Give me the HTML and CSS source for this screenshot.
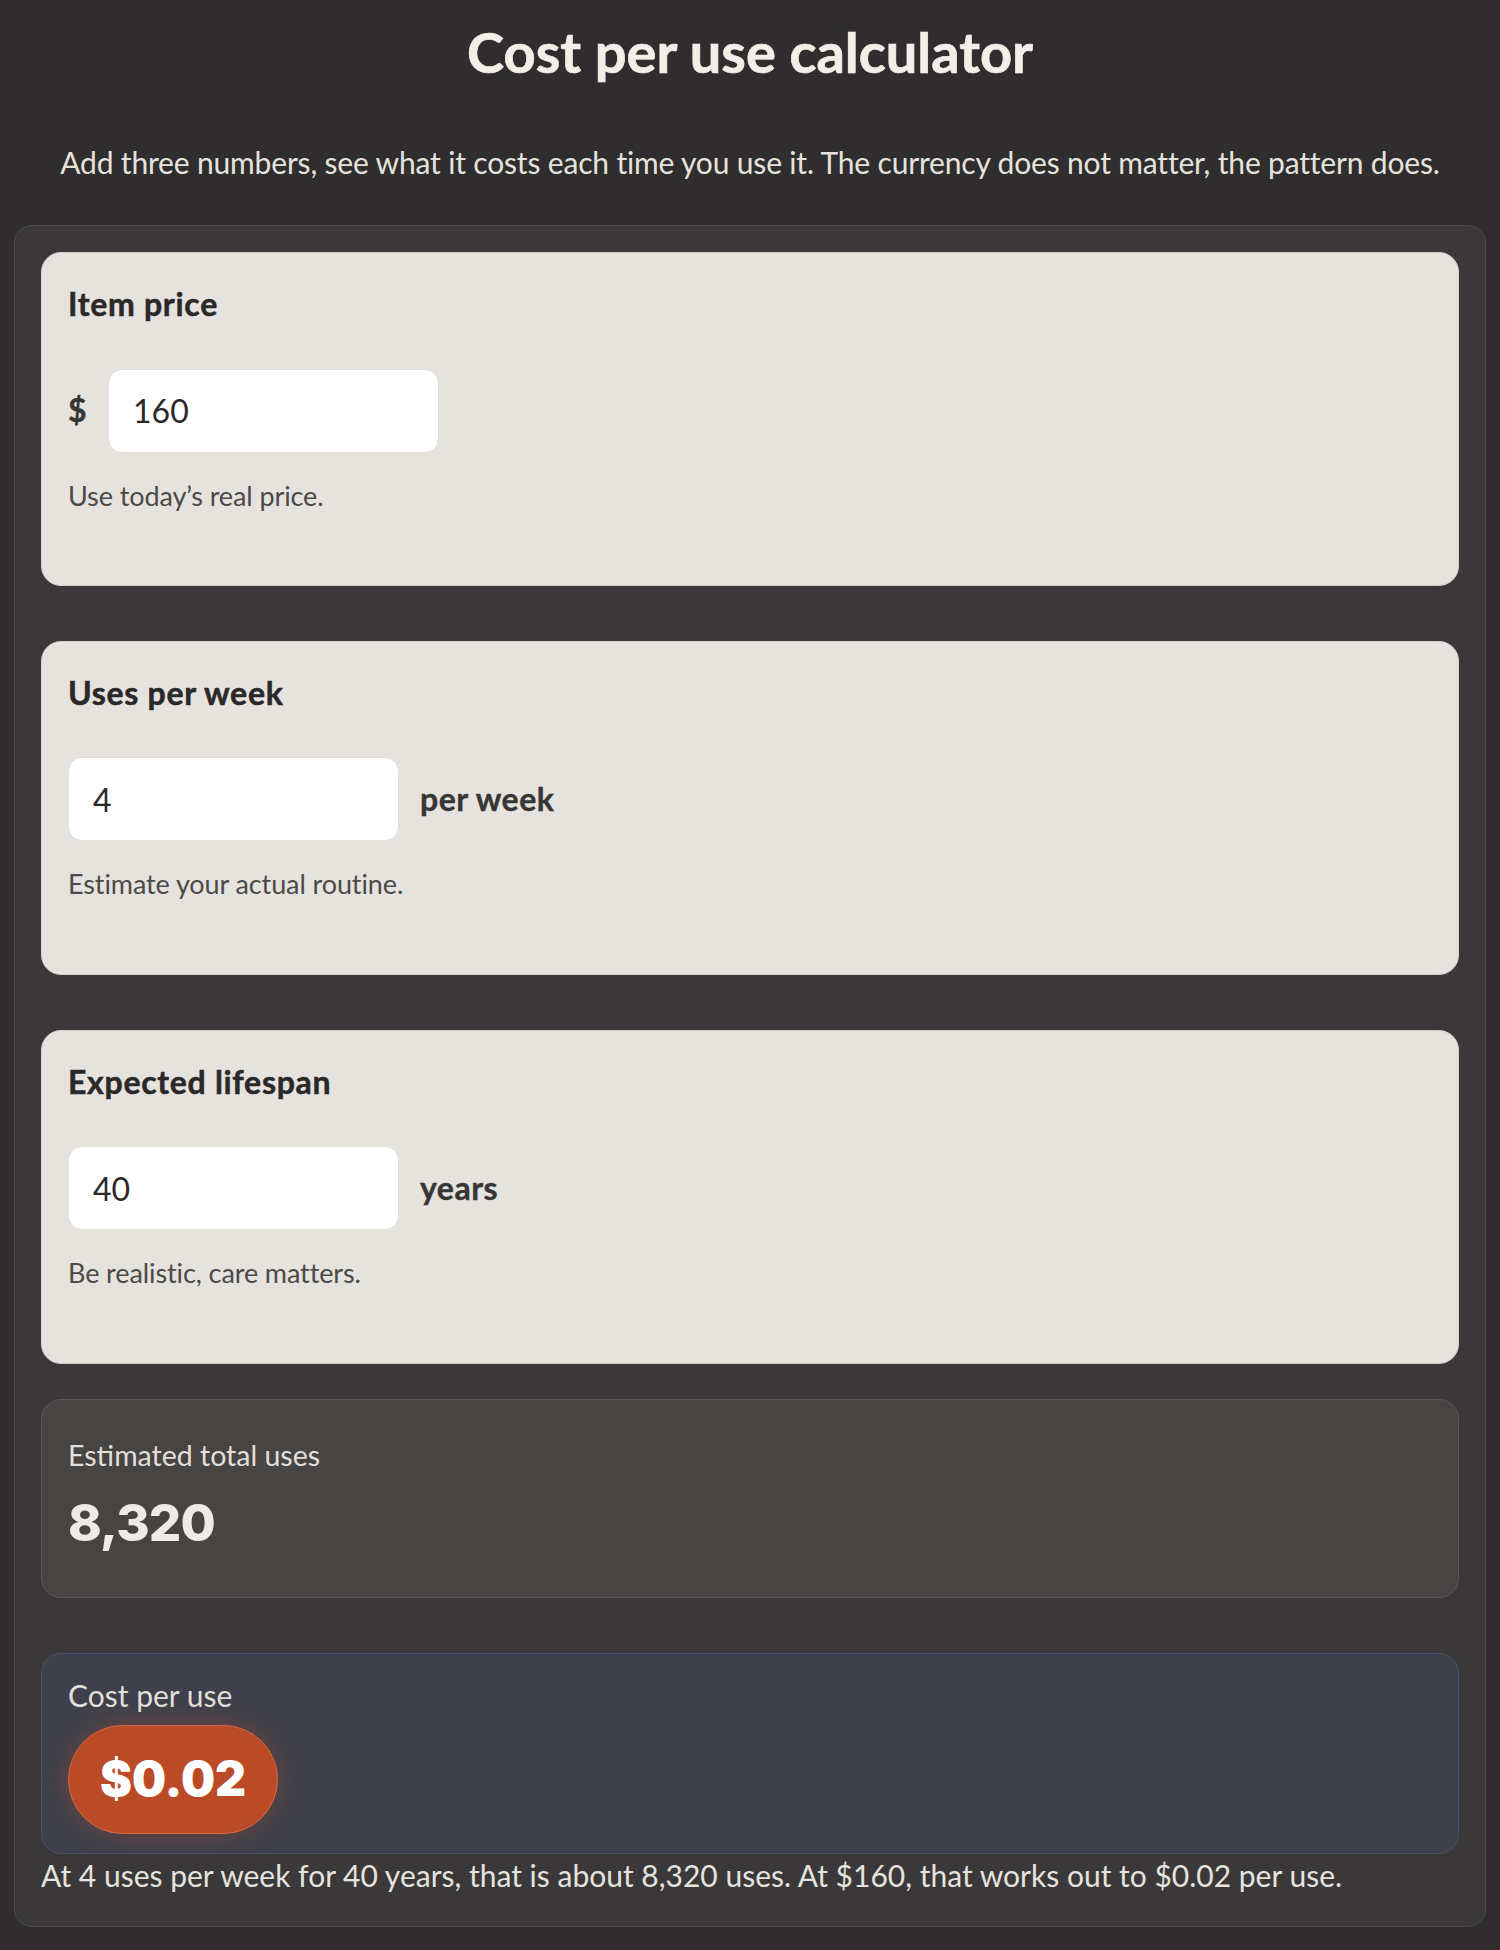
FILE: index.html
```html
<!DOCTYPE html>
<html lang="en">
<head>
<meta charset="utf-8">
<title>Cost per use calculator</title>
<link rel="stylesheet" href="styles.css">
</head>
<body>
<main class="page">
  <h1 class="title">Cost per use calculator</h1>
  <p class="intro">Add three numbers, see what it costs each time you use it. The currency does not matter, the pattern does.</p>
  <section class="calc">
    <div class="field">
      <label class="field-label" for="price">Item price</label>
      <div class="field-row">
        <span class="affix">$</span>
        <input class="num" id="price" type="text" value="160">
      </div>
      <p class="hint">Use today’s real price.</p>
    </div>
    <div class="field">
      <label class="field-label" for="uses">Uses per week</label>
      <div class="field-row">
        <input class="num" id="uses" type="text" value="4">
        <span class="affix">per week</span>
      </div>
      <p class="hint">Estimate your actual routine.</p>
    </div>
    <div class="field field-last">
      <label class="field-label" for="life">Expected lifespan</label>
      <div class="field-row">
        <input class="num" id="life" type="text" value="40">
        <span class="affix">years</span>
      </div>
      <p class="hint">Be realistic, care matters.</p>
    </div>
    <div class="stat">
      <div class="stat-label">Estimated total uses</div>
      <div class="stat-value">8,320</div>
    </div>
    <div class="result">
      <div class="result-label">Cost per use</div>
      <div class="pill">$0.02</div>
    </div>
    <p class="summary">At 4 uses per week for 40 years, that is about 8,320 uses. At $160, that works out to $0.02 per use.</p>
  </section>
</main>
</body>
</html>
```
FILE: styles.css
```css
* { box-sizing: border-box; }
html, body { margin: 0; padding: 0; }
body {
  background: #2f2d2e;
  font-family: Lato, "Open Sans", sans-serif;
  color: #e6e3dd;
}
.page {
  padding: 18px 14px 27px;
}
.title {
  margin: 0;
  text-align: center;
  font-size: 56px;
  line-height: 1.2;
  font-weight: 700;
  -webkit-text-stroke: 0.7px #f2efe9;
  color: #f2efe9;
}
.intro {
  margin: 59px 0 45px;
  text-align: center;
  font-size: 30px;
  line-height: 1.2;
  letter-spacing: -0.17px;
  color: #e6e3dd;
}
.calc {
  background: #3a3839;
  border: 1px solid #4c4a4a;
  border-radius: 18px;
  padding: 26px 26px 33px;
  display: flex;
  flex-direction: column;
}
.field {
  background: #e6e3df;
  border: 1px solid #d3cfc9;
  border-radius: 20px;
  padding: 32px 26px 73px;
  margin-bottom: 55px;
  color: #2a2828;
}
.field-last { margin-bottom: 35px; }
.field-label {
  display: block;
  font-size: 32px;
  line-height: 1.2;
  font-weight: 700;
  letter-spacing: 0.7px;
  -webkit-text-stroke: 0.5px #2a2828;
  color: #2a2828;
}
.field-row {
  display: flex;
  align-items: center;
  gap: 21px;
  margin-top: 45px;
}
.affix {
  font-size: 32px;
  line-height: 1.2;
  font-weight: 700;
  letter-spacing: 0.5px;
  -webkit-text-stroke: 0.4px #383635;
  color: #383635;
}
.num {
  width: 331px;
  height: 84px;
  background: #ffffff;
  border: 1px solid #e2dfda;
  border-radius: 14px;
  padding: 0 22px 0 24px;
  font-family: Lato, "Open Sans", sans-serif;
  font-size: 32px;
  color: #2b2929;
  outline: none;
}
.hint {
  margin: 27px 0 0;
  font-size: 27px;
  line-height: 1.2;
  letter-spacing: -0.1px;
  color: #4c4a48;
}
.stat {
  background: #474543;
  border: 1px solid #5a5856;
  border-radius: 20px;
  padding: 38px 26px 44px;
  margin-bottom: 55px;
}
.stat-label {
  font-size: 28.5px;
  line-height: 1.2;
  color: #e2dfda;
}
.stat-value {
  margin-top: 20px;
  font-family: Inter, "Liberation Sans", sans-serif;
  font-weight: 800;
  font-size: 51px;
  line-height: 1.2;
  letter-spacing: -0.8px;
  color: #eeebe6;
}
.result {
  background: #3e404b;
  border: 1px solid #4a5068;
  border-radius: 20px;
  padding: 23px 26px 19px;
}
.result-label {
  font-size: 30px;
  line-height: 1.2;
  color: #e2dfda;
}
.pill {
  margin-top: 12px;
  display: inline-flex;
  align-items: center;
  justify-content: center;
  height: 109px;
  padding: 0 31px;
  border-radius: 999px;
  background: #bb4b26;
  border: 1px solid #d06a44;
  box-shadow: 0 0 26px rgba(200, 80, 36, 0.35);
  font-family: Inter, "Liberation Sans", sans-serif;
  font-weight: 900;
  font-size: 48px;
  line-height: 1;
  color: #ffffff;
}
.summary {
  margin: 3px 0 0;
  font-size: 30px;
  line-height: 1.2;
  color: #e6e3de;
}
```
